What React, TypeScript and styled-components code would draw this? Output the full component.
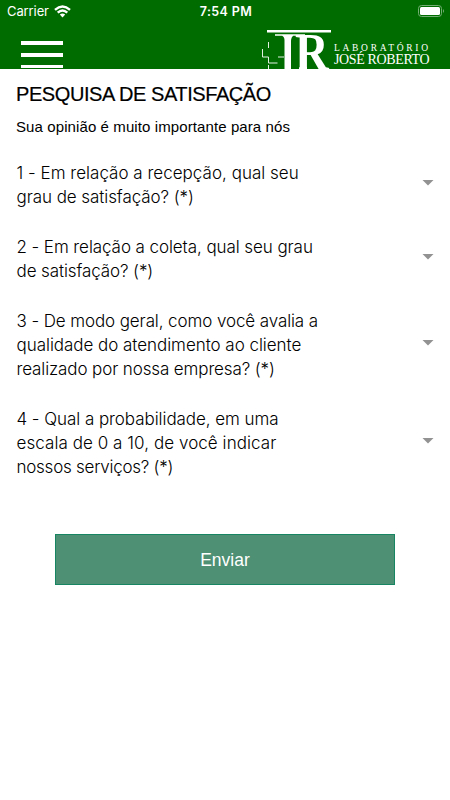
import React from 'react';
import styled, { createGlobalStyle } from 'styled-components';

const GlobalStyle = createGlobalStyle`
  * { box-sizing: border-box; }
  body { margin: 0; background: #fff; font-family: "Liberation Sans", Arial, sans-serif; color: #000; }
`;

const Screen = styled.div`
  width: 450px;
  height: 800px;
  background: #fff;
`;

const Header = styled.header`
  height: 69px;
  background: #006c00;
  color: #fff;
`;

const StatusBar = styled.div`
  display: grid;
  grid-template-columns: 1fr auto 1fr;
  align-items: center;
  height: 23px;
  padding: 0 5px 0 7px;
  font: 13px/23px Inter, sans-serif;
`;

const Carrier = styled.div`
  display: flex;
  align-items: center;
  gap: 5px;
  letter-spacing: -0.1px;
`;

const Clock = styled.div`
  font-weight: 600;
  font-size: 12.5px;
  letter-spacing: 0.4px;
`;

const Battery = styled.svg`
  justify-self: end;
`;

const NavBar = styled.div`
  display: flex;
  justify-content: space-between;
  height: 46px;
  padding: 0 20px 0 21px;
`;

const MenuButton = styled.button`
  display: flex;
  flex-direction: column;
  gap: 8px;
  width: 42px;
  padding: 18px 0 0;
  border: 0;
  background: none;
`;

const MenuLine = styled.span<{ $thickness?: number }>`
  flex: none;
  height: ${p => p.$thickness ?? 4}px;
  background: #fff;
`;

const Brand = styled.div`
  display: flex;
  gap: 3px;
`;

const Monogram = styled.svg`
  overflow: visible;
`;

const BrandText = styled.div`
  padding-top: 20px;
  width: 96px;
  font-family: "Liberation Serif", serif;
  white-space: nowrap;
`;

const BrandSmall = styled.div`
  font-size: 9.5px;
  line-height: 10px;
  letter-spacing: 2.7px;
`;

const BrandName = styled.div`
  font-size: 14px;
  line-height: 13px;
  letter-spacing: -0.37px;
`;

const Title = styled.h1`
  margin: 0;
  padding: 13px 16px 0;
  font-size: 20px;
  line-height: 24px;
  font-weight: 400;
  letter-spacing: -0.42px;
  -webkit-text-stroke: 0.2px #000;
`;

const Subtitle = styled.p`
  margin: 0;
  padding: 11px 16px 0;
  font-size: 15px;
  line-height: 20px;
  letter-spacing: 0.1px;
`;

const Questions = styled.div`
  display: flex;
  flex-direction: column;
  gap: 25px;
  padding: 23px 16px 0 16.5px;
`;

const Question = styled.div`
  display: flex;
  align-items: center;
  justify-content: space-between;
`;

const Prompt = styled.div`
  padding-top: 1px;
  font: 300 17px/24px Inter, sans-serif;
`;

const Line = styled.div<{ $spacing: number }>`
  letter-spacing: ${p => p.$spacing}px;
  white-space: nowrap;
`;

const Caret = styled.svg`
  flex: none;
  margin-top: -4px;
`;

const Submit = styled.button`
  display: block;
  width: 340px;
  height: 51px;
  margin: 55px 0 0 55px;
  padding: 1px 0 0;
  border: 1px solid #188562;
  background: #4d9073;
  color: #fff;
  font: 17.5px "Liberation Sans", Arial, sans-serif;
`;

const questions: [string, number][][] = [
  [['1 - Em relação a recepção, qual seu', 0.02], ['grau de satisfação? (*)', -0.07]],
  [['2 - Em relação a coleta, qual seu grau', -0.08], ['de satisfação? (*)', -0.1]],
  [['3 - De modo geral, como você avalia a', -0.1], ['qualidade do atendimento ao cliente', -0.04], ['realizado por nossa empresa? (*)', -0.12]],
  [['4 - Qual a probabilidade, em uma', -0.06], ['escala de 0 a 10, de você indicar', 0.06], ['nossos serviços? (*)', -0.25]],
];

const App = () => (
  <Screen>
    <GlobalStyle />
    <Header>
      <StatusBar>
        <Carrier>
          Carrier
          <svg width="17" height="13" viewBox="0 0 17 13" fill="none" stroke="#fff" strokeWidth="2.4">
            <path d="M1 4.8Q8.5-1.9 16 4.8M3.7 7.7Q8.5 3.4 13.3 7.7" />
            <path d="M5.8 9.6Q8.5 7.4 11.2 9.6L8.5 12.5Z" fill="#fff" stroke="none" />
          </svg>
        </Carrier>
        <Clock>7:54 PM</Clock>
        <Battery width="27" height="13" viewBox="0 0 27 13">
          <rect x="0.5" y="0.5" width="23" height="11" rx="3" fill="none" stroke="#75ae75" />
          <rect x="2" y="2" width="20" height="8" rx="1.5" fill="#fff" />
          <path d="M25 4Q27 6 25 8Z" fill="#75ae75" />
        </Battery>
      </StatusBar>
      <NavBar>
        <MenuButton aria-label="Menu"><MenuLine /><MenuLine /><MenuLine $thickness={3} /></MenuButton>
        <Brand>
          <Monogram width="70" height="46" viewBox="261 23 70 46" fill="#fff">
            <path d="M267 30h64v2.4h-64zM275 34.3h30v1.4h-30zM281 35h13Q291 37 291 41v28h-6.5V40Q284.5 36.500 281 35z" />
            <path d="M268.5 42v6M262.5 49v8h6v6h9M278 57h6M268.5 65v4" fill="none" stroke="#e2f0e2" />
            <text transform="translate(295 70) scale(.88 1)" fontFamily="Liberation Serif" fontSize="53" fontWeight="700">R</text>
            <path d="M291 50h8v19h-8zM307 62h5v7h-5z" fill="#006c00" />
          </Monogram>
          <BrandText>
            <BrandSmall>LABORATÓRIO</BrandSmall>
            <BrandName>JOSÉ ROBERTO</BrandName>
          </BrandText>
        </Brand>
      </NavBar>
    </Header>
    <main>
      <Title>PESQUISA DE SATISFAÇÃO</Title>
      <Subtitle>Sua opinião é muito importante para nós</Subtitle>
      <Questions>
        {questions.map((lines, i) => (
          <Question key={i}>
            <Prompt>
              {lines.map(([text, spacing]) => <Line key={text} $spacing={spacing}>{text}</Line>)}
            </Prompt>
            <Caret width="12" height="6" viewBox="0 0 12 6"><path d="M.5 0h11L6 5.500z" fill="#929292" /></Caret>
          </Question>
        ))}
      </Questions>
      <Submit>Enviar</Submit>
    </main>
  </Screen>
);

export default App;
